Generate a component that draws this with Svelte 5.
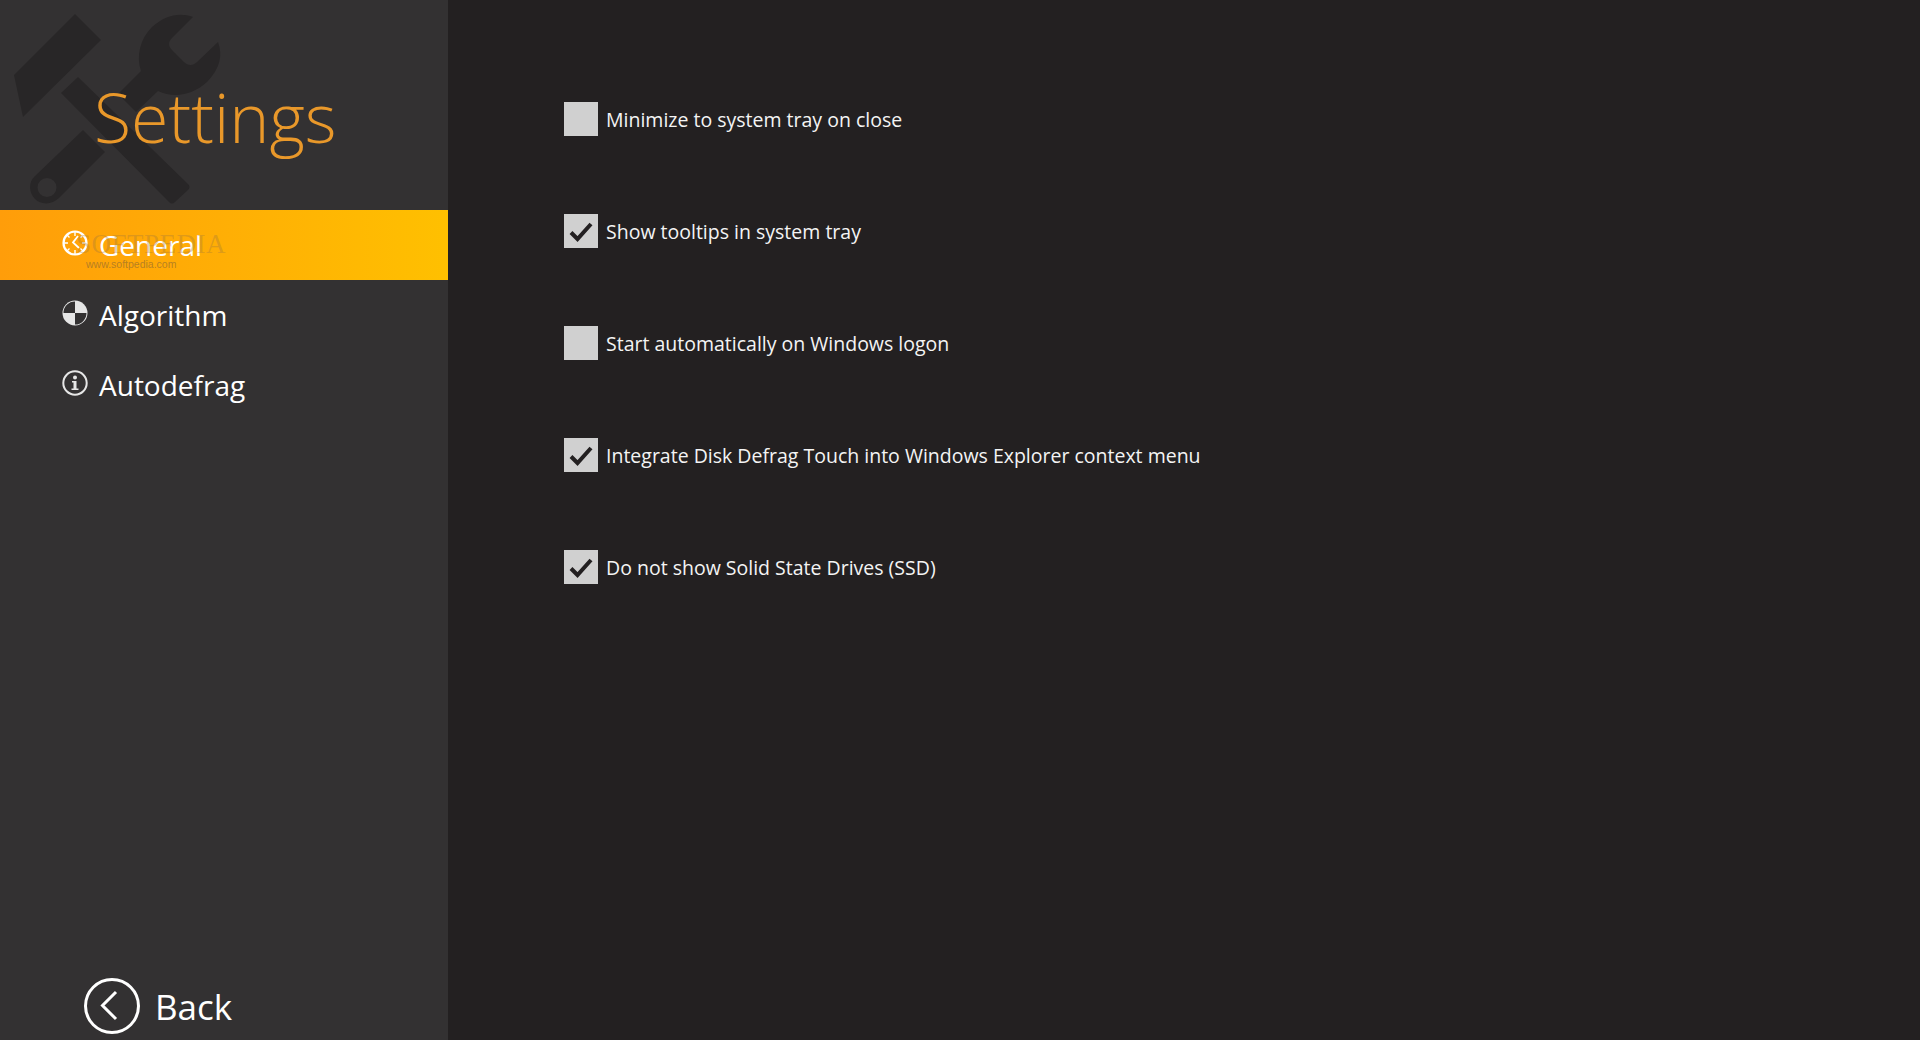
<script>
    let nav = [
        { id: 'general', label: 'General' },
        { id: 'algorithm', label: 'Algorithm' },
        { id: 'autodefrag', label: 'Autodefrag' }
    ]

    let active = $state('general')

    let options = $state([
        { label: 'Minimize to system tray on close', on: false },
        { label: 'Show tooltips in system tray', on: true },
        { label: 'Start automatically on Windows logon', on: false },
        { label: 'Integrate Disk Defrag Touch into Windows Explorer context menu', on: true },
        { label: 'Do not show Solid State Drives (SSD)', on: true }
    ])
</script>

<main>
    <aside>
        <header>
            <svg class="tools" width="240" height="210" viewBox="0 0 240 210">
                <path d="M75 14 101 40 23 117 14 75Z" />
                <path d="M83 130 105 152 59 198C52 205 41 205 35 199 29 193 28 182 35 176ZM47 178A9.500 9.500 0 1 0 47 197 9.500 9.500 0 1 0 47 178Z" fill-rule="evenodd" />
                <path d="M78 77 188 184C190 186 190 188 188 190L175 202C173 204 171 204 169 202L61 93Z" />
                <path d="M193 17C180 12 165 15 152 27 140 39 136 56 141 71L118 94 136 112 158 91C175 99 194 94 207 82 220 69 223 55 218 42L197 62C193 66 188 66 184 62L172 50C168 46 168 42 172 38Z" />
            </svg>
            <h1>Settings</h1>
        </header>

        <nav>
            {#each nav as item}
                <button class="nav-item" class:active={active === item.id} onclick={() => (active = item.id)}>
                    <svg class="nav-icon" width="26" height="26" viewBox="0 0 26 26">
                        {#if item.id === 'general'}
                            <circle cx="13" cy="13" r="11.500" fill="none" stroke="currentColor" stroke-width="2.200" />
                            <path d="M13 2v4M13 20v4M2 13h4M20 13h4M5 5l2.500 2.500M21 5l-2.500 2.500M5 21l2.500-2.500M21 21l-2.500-2.500" stroke="currentColor" stroke-width="1.400" />
                            <path d="M16 6 11 12.500 17 18" fill="none" stroke="currentColor" stroke-width="1.800" />
                        {:else if item.id === 'algorithm'}
                            <circle cx="13" cy="13" r="12.500" fill="currentColor" />
                            <path d="M13 1.500A11.500 11.500 0 0 0 1.500 13H13ZM13 13V24.500A11.500 11.500 0 0 0 24.500 13Z" fill="#333132" />
                            <path d="M13 2A11 11 0 0 0 2 13H13ZM13 13V24A11 11 0 0 0 24 13Z" fill="#333132" />
                        {:else}
                            <circle cx="13" cy="13" r="11.700" fill="none" stroke="currentColor" stroke-width="2" />
                            <circle cx="13" cy="7.500" r="2" fill="currentColor" />
                            <path d="M10 11h4.500v7.500H16.500V20H9.500V18.500H11.500V12.500H10Z" fill="currentColor" />
                        {/if}
                    </svg>
                    <span>{item.label}</span>
                    {#if item.id === 'general'}
                        <span class="mark">SOFTPEDIA</span>
                        <span class="mark-url">www.softpedia.com</span>
                    {/if}
                </button>
            {/each}
        </nav>

        <button class="back">
            <svg width="58" height="58" viewBox="0 0 58 58">
                <circle cx="29" cy="29" r="26.500" fill="none" stroke="#fff" stroke-width="3" />
                <path d="M33 15 19.500 28.500 33 42" fill="none" stroke="#fff" stroke-width="3" />
            </svg>
            <span>Back</span>
        </button>
    </aside>

    <section class="content">
        {#each options as opt}
            <label class="option">
                <input type="checkbox" bind:checked={opt.on} />
                <span class="box">
                    {#if opt.on}
                        <svg width="34" height="34" viewBox="0 0 34 34">
                            <path d="M7 18.500 13.500 25 27 10" fill="none" stroke="#232021" stroke-width="4" />
                        </svg>
                    {/if}
                </span>
                <span class="text">{opt.label}</span>
            </label>
        {/each}
    </section>
</main>

<style>
    :global(body) {
        background: #232021;
    }

    main {
        display: flex;
        height: 1040px;
        overflow: hidden;
        font-family: "Open Sans", "Noto Sans", sans-serif;
        color: #fff;
    }

    aside {
        display: flex;
        flex-direction: column;
        flex: none;
        width: 448px;
        background: #333132;
    }

    header {
        position: relative;
        height: 210px;
        padding-left: 94px;
        box-sizing: border-box;
    }

    .tools {
        position: absolute;
        top: 0;
        left: 0;
        fill: #282627;
    }

    h1 {
        position: relative;
        margin: 0;
        padding-top: 71px;
        font-size: 68px;
        line-height: 92px;
        font-weight: 300;
        color: #e9982a;
    }

    nav {
        display: flex;
        flex-direction: column;
        flex: 1;
    }

    .nav-item {
        position: relative;
        display: flex;
        align-items: center;
        gap: 11px;
        height: 70px;
        padding: 0 0 0 62px;
        border: 0;
        background: none;
        color: #fff;
        font: inherit;
        font-size: 28px;
        cursor: pointer;
    }

    .nav-item.active {
        background: linear-gradient(90deg, #ff9d0a, #ffc000);
    }

    .nav-icon {
        flex: none;
        margin-top: -4px;
        color: #e6e6e6;
    }

    .active .nav-icon {
        color: #fff;
    }

    .mark {
        position: absolute;
        left: 76px;
        top: 19px;
        font-family: "Liberation Serif", serif;
        font-size: 27px;
        letter-spacing: 0.5px;
        color: rgba(160, 120, 60, 0.35);
    }

    .mark-url {
        position: absolute;
        left: 86px;
        top: 48px;
        font-family: "Liberation Sans", sans-serif;
        font-size: 10.500px;
        color: rgba(140, 105, 50, 0.65);
    }

    .back {
        display: flex;
        align-items: center;
        gap: 14px;
        height: 58px;
        margin-bottom: 5px;
        padding: 0 0 0 83px;
        border: 0;
        background: none;
        color: #fff;
        font: inherit;
        font-size: 35px;
        cursor: pointer;
    }

    .content {
        display: flex;
        flex-direction: column;
        flex: 1;
        gap: 78px;
        padding: 102px 0 0 116px;
    }

    .option {
        display: flex;
        align-items: center;
        gap: 8px;
        height: 34px;
        font-size: 19.500px;
        color: #f4f4f4;
        cursor: pointer;
    }

    .option input {
        display: none;
    }

    .box {
        display: block;
        width: 34px;
        height: 34px;
        background: #d0d0d0;
    }

    .box svg {
        display: block;
    }
</style>
